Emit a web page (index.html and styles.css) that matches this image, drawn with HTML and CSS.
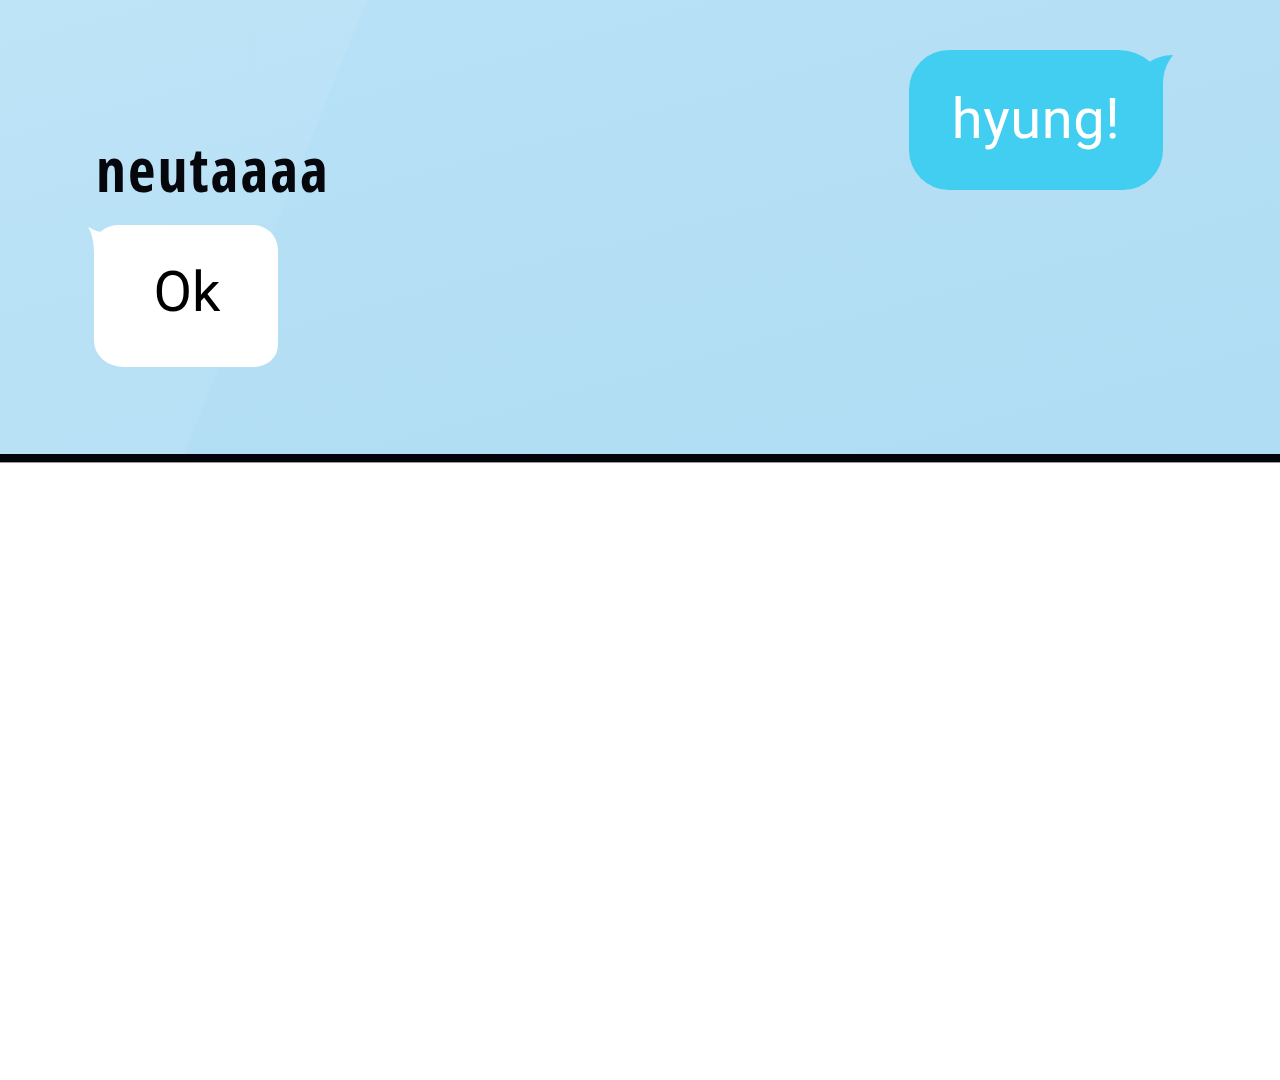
FILE: index.html
```html
<!DOCTYPE html>
<html lang="en">
<head>
<meta charset="utf-8">
<title>Chat</title>
<link rel="stylesheet" href="styles.css">
</head>
<body>
<main class="page">
  <section class="chat">
    <div class="incoming">
      <div class="sender">neutaaaa</div>
      <div class="bubble bubble-in">
        <svg class="tail tail-in" width="20" height="30" viewBox="0 0 20 30" aria-hidden="true"><path d="M0 2 C5 4 9 7 14 7 L20 7 L20 30 L6 30 C6 18 4 8 0 2 Z" fill="#ffffff"/></svg>
        <span class="msg msg-in">Ok</span>
      </div>
    </div>
    <div class="outgoing">
      <div class="bubble bubble-out">
        <svg class="tail tail-out" width="37" height="45" viewBox="0 0 37 45" aria-hidden="true"><path d="M0 6 C3 8 6 11 8 13 C14 8 24 5 33 5 C28 12 23 20 23 35 L23 45 L0 45 Z" fill="#42cef0"/></svg>
        <span class="msg msg-out">hyung!</span>
      </div>
    </div>
  </section>
  <div class="divider"></div>
  <section class="blank"></section>
</main>
</body>
</html>
```
FILE: styles.css
```css
html, body {
  margin: 0;
  padding: 0;
  background: #ffffff;
}
.page {
  display: flex;
  flex-direction: column;
  width: 1280px;
  min-height: 1080px;
}
.chat {
  height: 454px;
  display: flex;
  justify-content: space-between;
  align-items: flex-start;
  background:
    linear-gradient(112deg, rgba(255,255,255,0.07) 0%, rgba(255,255,255,0.07) 25%, rgba(255,255,255,0) 25.2%),
    linear-gradient(165deg, #b9e2f6 0%, #b4dff5 40%, #b1ddf4 100%);
  box-sizing: border-box;
}
.incoming {
  display: flex;
  flex-direction: column;
  align-items: flex-start;
  padding: 134px 0 0 94px;
}
.sender {
  font-family: "Open Sans", "Noto Sans", sans-serif;
  font-weight: 700;
  font-stretch: 75%;
  font-size: 60px;
  line-height: 70px;
  color: #05070d;
  margin-left: 2px;
  letter-spacing: 2px;
}
.bubble {
  position: relative;
  display: flex;
  align-items: center;
  justify-content: center;
  box-sizing: border-box;
}
.bubble-in {
  margin-top: 21px;
  width: 184px;
  height: 142px;
  background: #ffffff;
  border-radius: 24px 25px 24px 30px / 22px 25px 22px 26px;
}
.tail {
  position: absolute;
  display: block;
}
.tail-in {
  left: -6px;
  top: 0;
}
.msg {
  font-family: Roboto, "Liberation Sans", sans-serif;
  font-weight: 400;
}
.msg-in {
  font-size: 56px;
  color: #000000;
  margin-left: 2px;
  margin-top: -8px;
}
.outgoing {
  padding: 50px 117px 0 0;
}
.bubble-out {
  width: 254px;
  height: 140px;
  background: #42cef0;
  border-radius: 40px 45px 40px 40px / 40px 40px 40px 40px;
}
.tail-out {
  left: 231px;
  top: 0;
}
.msg-out {
  font-size: 56px;
  color: #ffffff;
  letter-spacing: 0.6px;
  margin-top: -2px;
}
.divider {
  height: 8px;
  background: #02040a;
  border-bottom: 1px solid #9a9a9a;
}
.blank {
  flex: 1;
  background: #ffffff;
}
```
